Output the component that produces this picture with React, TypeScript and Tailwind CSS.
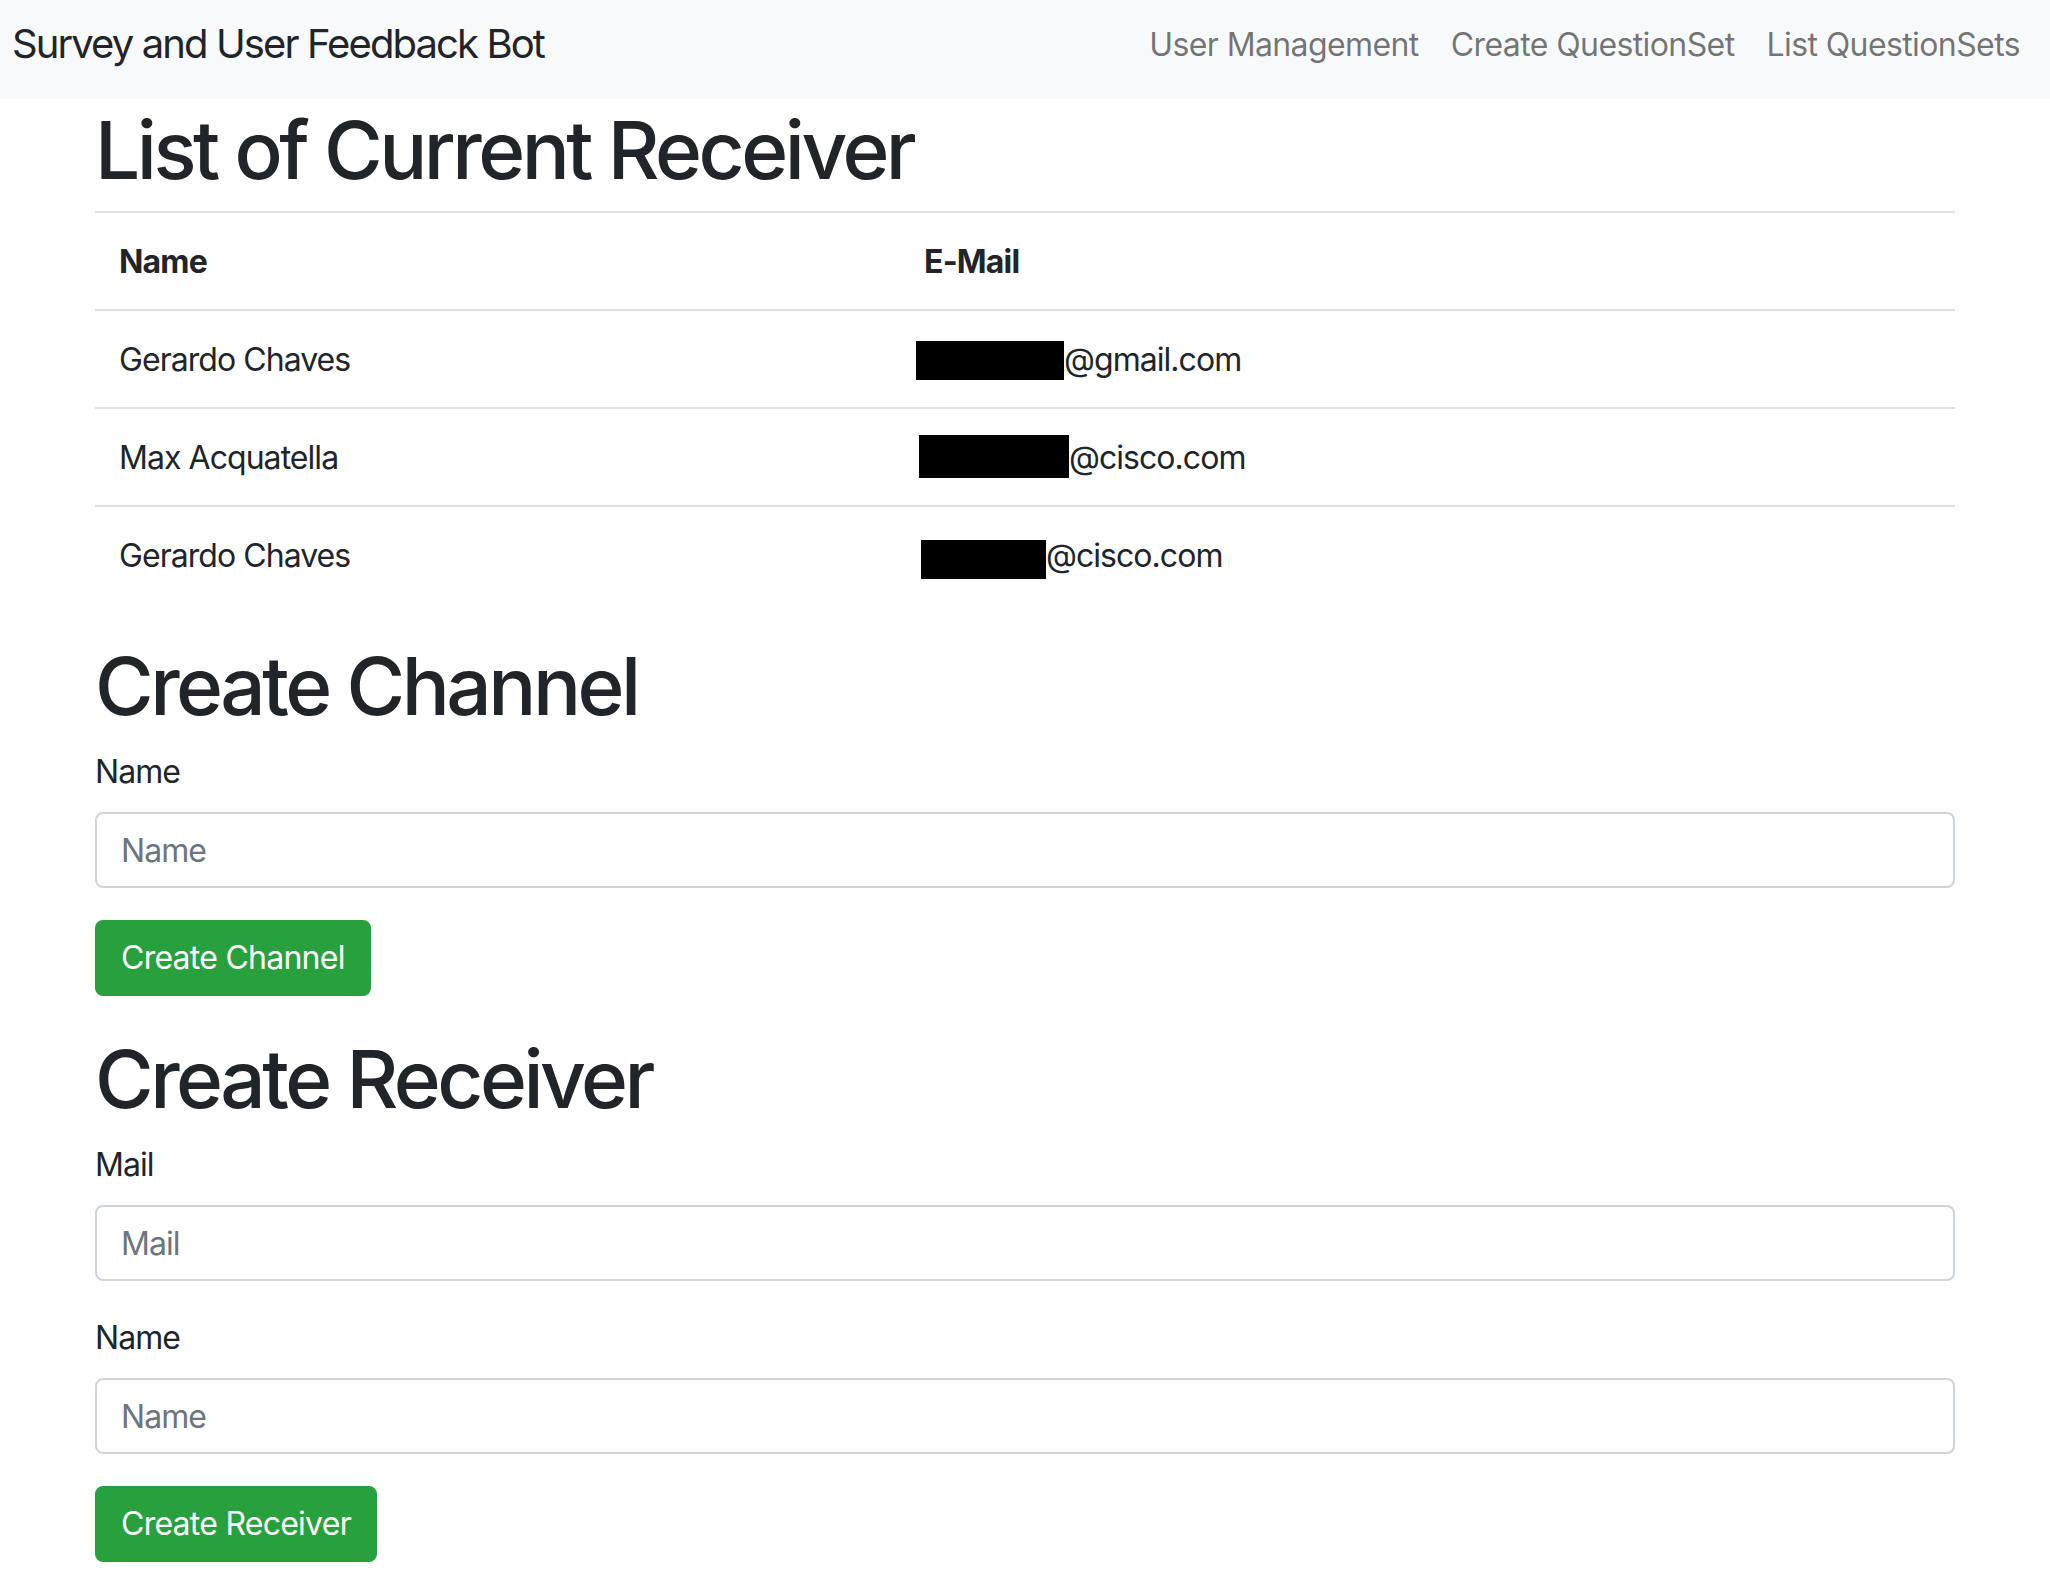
import React from "react";

const links = ["User Management", "Create QuestionSet", "List QuestionSets"];

const rows = [
  { name: "Gerardo Chaves", box: "w-[148px] h-[39px] ml-[-8px]", off: "", domain: "@gmail.com" },
  { name: "Max Acquatella", box: "w-[150px] h-[43px] ml-[-5px]", off: "relative top-[-2px]", domain: "@cisco.com" },
  { name: "Gerardo Chaves", box: "w-[125px] h-[39px] ml-[-3px]", off: "relative top-[3px]", domain: "@cisco.com" },
];

function Heading({ children }: { children: React.ReactNode }) {
  return (
    <h1 className="text-[80px] leading-[91px] pt-[5px] font-medium tracking-[-3.5px] mb-[16px]">
      {children}
    </h1>
  );
}

function Field({ label }: { label: string }) {
  return (
    <div className="mb-[32px]">
      <label className="block mb-[16px] text-[32px] leading-[48px] pt-[1px] tracking-[-0.95px]">{label}</label>
      <input
        placeholder={label}
        className="block w-full h-[76px] px-[24px] border-2 border-[#ced4da] rounded-[8px] text-[32px] leading-[48px] tracking-[-0.95px] text-[#495057] placeholder:text-[#6c757d] outline-none bg-white"
      />
    </div>
  );
}

function Button({ children }: { children: React.ReactNode }) {
  return (
    <button className="h-[76px] px-[24px] border-2 border-[#28a03e] bg-[#28a03e] text-white text-[32px] leading-[48px] tracking-[-0.75px] rounded-[8px]">
      {children}
    </button>
  );
}

export default function App() {
  return (
    <div className="min-h-screen bg-white text-[#212529] font-[Inter,sans-serif]">
      <nav className="h-[99px] bg-[#f8f9fa] flex items-start justify-between pl-[12px] pr-[14px] pt-[14px]">
        <div className="text-[40px] leading-[60px] tracking-[-1.9px]">Survey and User Feedback Bot</div>
        <div className="flex h-[60px] items-center pt-[1px]">
          {links.map((l) => (
            <a key={l} className="px-[16px] text-[32px] leading-[48px] tracking-[-0.6px] text-black/55">
              {l}
            </a>
          ))}
        </div>
      </nav>
      <main className="mx-auto w-[1860px]">
        <Heading>List of Current Receiver</Heading>
        <table className="w-full mb-[32px] text-[32px] leading-[48px] tracking-[-0.95px]">
          <thead>
            <tr>
              <th className="w-[805px] text-left font-bold px-[24px] pt-[25px] pb-[23px] border-t-2 border-[#dee2e6] tracking-[-0.8px]">
                Name
              </th>
              <th className="text-left font-bold px-[24px] pt-[25px] pb-[23px] border-t-2 border-[#dee2e6] tracking-[-0.8px]">
                E-Mail
              </th>
            </tr>
          </thead>
          <tbody>
            {rows.map((r, i) => (
              <tr key={i}>
                <td className="px-[24px] pt-[25px] pb-[23px] border-t-2 border-[#dee2e6]">{r.name}</td>
                <td className="px-[24px] pt-[25px] pb-[23px] border-t-2 border-[#dee2e6]">
                  <div className="flex items-center">
                    <span className={"block bg-black shrink-0 " + r.box + " " + r.off} />
                    <span>{r.domain}</span>
                  </div>
                </td>
              </tr>
            ))}
          </tbody>
        </table>

        <Heading>Create Channel</Heading>
        <div className="mb-[32px]">
          <Field label="Name" />
          <Button>Create Channel</Button>
        </div>

        <Heading>Create Receiver</Heading>
        <div>
          <Field label="Mail" />
          <Field label="Name" />
          <Button>Create Receiver</Button>
        </div>
      </main>
    </div>
  );
}
